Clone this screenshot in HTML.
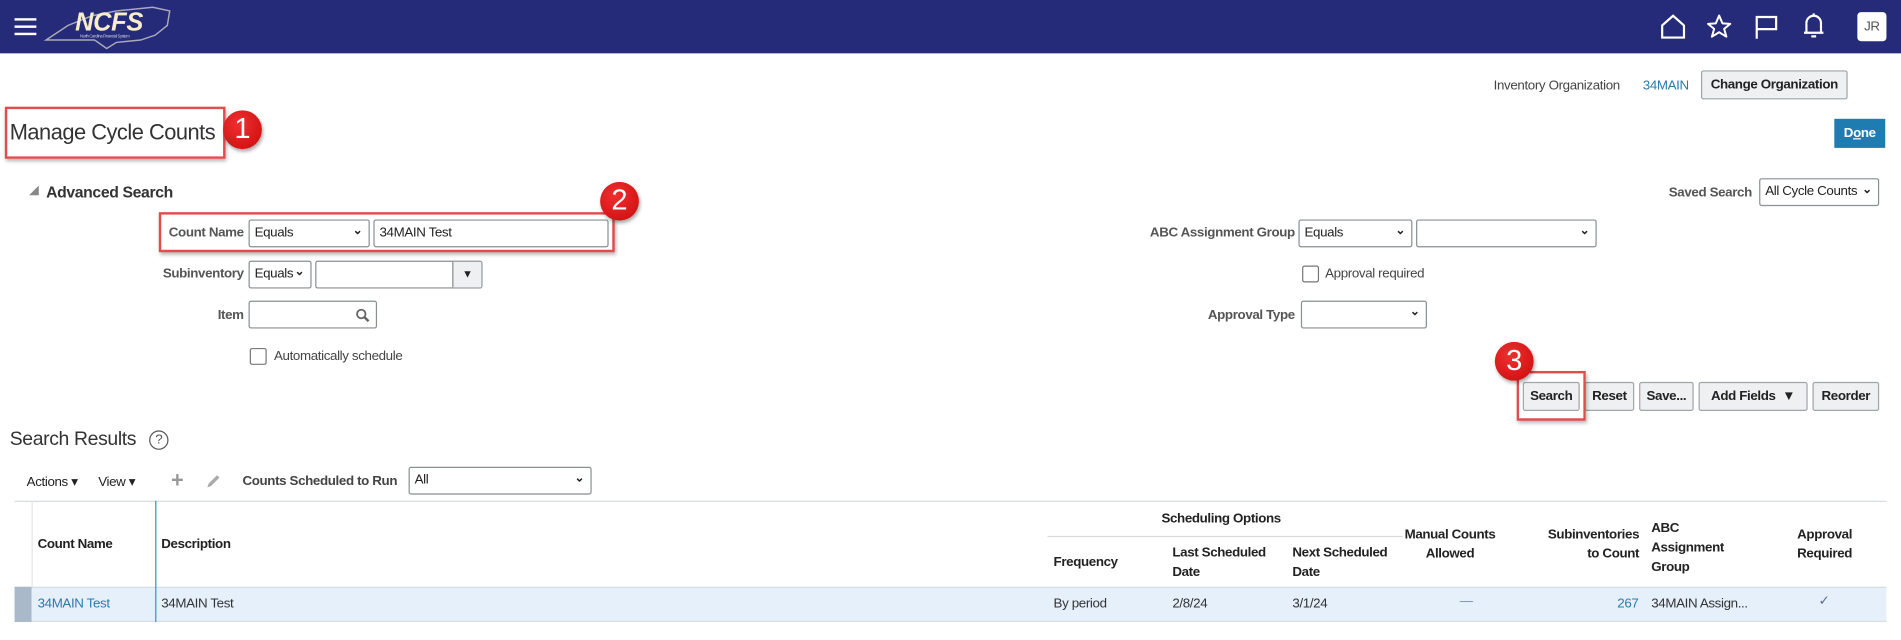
<!DOCTYPE html>
<html><head><meta charset="utf-8">
<style>
html,body{margin:0;padding:0;width:1901px;height:640px;overflow:hidden;background:#fff}
#w{position:absolute;left:0;top:0;width:1568px;height:528px;transform:scale(1.21237);transform-origin:0 0;font-family:"Liberation Sans",sans-serif;color:#333;font-size:11px;letter-spacing:-0.3px}
.a{position:absolute;white-space:nowrap}
.lbl{position:absolute;font-weight:bold;color:#555;font-size:11px;text-align:right;white-space:nowrap}
.sel{position:absolute;border:1px solid #8a8f94;border-radius:2px;background:#fff;box-sizing:border-box;font-size:11px;color:#222;padding:4px 4px;height:23px;white-space:nowrap}
.sel .ch{position:absolute;right:5px;top:3px;font-size:10px;font-weight:bold}
.btn{position:absolute;border:1px solid #a0a5a9;background:#eef0f1;box-sizing:border-box;font-weight:bold;font-size:11px;color:#222;text-align:center;line-height:22px;height:24px;border-radius:2px;white-space:nowrap}
.red{position:absolute;border:2px solid #e24c4c;box-sizing:border-box;box-shadow:1px 2px 3px rgba(0,0,0,.3)}
.badge{position:absolute;width:32px;height:32px;border-radius:50%;background:radial-gradient(circle at 40% 35%,#f03030,#c80a0a);color:#fff;font-size:24px;text-align:center;line-height:32px;box-shadow:1px 2px 3px rgba(0,0,0,.35);letter-spacing:0}
.cb{position:absolute;width:12px;height:12px;border:1px solid #777;border-radius:2px;background:#fff}
.th{position:absolute;font-weight:bold;font-size:11px;color:#222;line-height:16px;white-space:nowrap}
.td{position:absolute;font-size:11px;color:#333;white-space:nowrap}
</style></head><body><div id="w">
<div class="a" style="left:0;top:0;width:1568px;height:44px;background:#252b78"></div>
<div class="a" style="left:12px;top:15px;width:18px;height:2px;background:#fff;box-shadow:0 6px 0 #fff,0 12px 0 #fff"></div>
<svg class="a" style="left:36px;top:3px" width="108" height="38" viewBox="0 0 108 38"><path d="M2 30 L20 18 L40 10 L60 6 L90 3 L104 6 L102 18 L92 26 L80 30 L60 32 L52 37 L42 30 Z" fill="none" stroke="#aab" stroke-width="1.2"/><text x="26" y="22" font-family="Liberation Sans" font-style="italic" font-weight="bold" font-size="21" fill="#f7eccc">NCFS</text><text x="30" y="28" font-size="3.5" fill="#ccd">North Carolina Financial System</text></svg>
<svg class="a" style="left:1369px;top:11px" width="22" height="22" viewBox="0 0 22 22"><path d="M2 10 L11 2 L20 10 L20 20 L2 20 Z" fill="none" stroke="#fff" stroke-width="1.8"/></svg>
<svg class="a" style="left:1407px;top:11px" width="22" height="22" viewBox="0 0 24 24"><path d="M12 2 L15 9 L22 9.5 L16.5 14 L18.5 21 L12 17 L5.5 21 L7.5 14 L2 9.5 L9 9 Z" fill="none" stroke="#fff" stroke-width="1.8" stroke-linejoin="round"/></svg>
<svg class="a" style="left:1446px;top:11px" width="22" height="22" viewBox="0 0 22 22"><path d="M3 21 V3 H19 V13 H3" fill="none" stroke="#fff" stroke-width="1.8"/></svg>
<svg class="a" style="left:1485px;top:10px" width="22" height="24" viewBox="0 0 22 24"><path d="M5 17 V9 A6 6 0 0 1 17 9 V17 M3 17 H19 M9 20 H13 M11 1 V3" fill="none" stroke="#fff" stroke-width="1.8"/></svg>
<div class="a" style="left:1532px;top:10px;width:24px;height:24px;background:#fff;border-radius:3px;color:#555;font-size:11px;text-align:center;line-height:24px">JR</div>

<div class="a" style="left:1232px;top:65px;color:#444;font-size:11px">Inventory Organization</div>
<div class="a" style="left:1355px;top:65px;color:#2a7bab;font-size:11px">34MAIN</div>
<div class="btn" style="left:1403px;top:58px;width:121px">Change Organization</div>

<div class="a" style="left:8px;top:99px;font-size:18px;color:#333;letter-spacing:-0.4px">Manage Cycle Counts</div>
<div class="red" style="left:4px;top:88px;width:182px;height:43px"></div>
<div class="badge" style="left:184px;top:91px">1</div>
<div class="a" style="left:1513px;top:98px;width:42px;height:24px;background:#1f7cb0;color:#fff;font-weight:bold;text-align:center;line-height:24px">D<u>o</u>ne</div>

<div class="a" style="left:24px;top:153px;width:0;height:0;border-left:8px solid transparent;border-bottom:8px solid #888"></div>
<div class="a" style="left:38px;top:151px;font-size:13px;font-weight:bold;color:#333">Advanced Search</div>
<div class="lbl" style="left:1340px;top:153px;width:105px">Saved Search</div>
<div class="sel" style="left:1451px;top:147px;width:99px">All Cycle Counts<span class="ch">⌄</span></div>

<div class="lbl" style="left:100px;top:186px;width:101px">Count Name</div>
<div class="sel" style="left:205px;top:181px;width:100px">Equals<span class="ch">⌄</span></div>
<div class="sel" style="left:308px;top:181px;width:194px">34MAIN Test</div>
<div class="red" style="left:131px;top:175px;width:376px;height:33px"></div>
<div class="badge" style="left:495px;top:150px">2</div>

<div class="lbl" style="left:900px;top:186px;width:168px">ABC Assignment Group</div>
<div class="sel" style="left:1071px;top:181px;width:94px">Equals<span class="ch">⌄</span></div>
<div class="sel" style="left:1168px;top:181px;width:149px"><span class="ch">⌄</span></div>

<div class="lbl" style="left:100px;top:220px;width:101px">Subinventory</div>
<div class="sel" style="left:205px;top:215px;width:52px">Equals<span class="ch">⌄</span></div>
<div class="sel" style="left:260px;top:215px;width:138px;padding:0"><div style="position:absolute;right:0;top:0;width:23px;height:21px;border-left:1px solid #8a8f94;background:#eef0f1;text-align:center;line-height:21px;font-size:9px">▼</div></div>
<div class="cb" style="left:1074px;top:219px"></div>
<div class="a" style="left:1093px;top:220px;color:#444">Approval required</div>

<div class="lbl" style="left:100px;top:254px;width:101px">Item</div>
<div class="sel" style="left:205px;top:248px;width:106px"><svg style="position:absolute;right:5px;top:5px" width="12" height="12" viewBox="0 0 12 12"><circle cx="5" cy="5" r="3.5" fill="none" stroke="#666" stroke-width="1.5"/><path d="M7.5 7.5 L11 11" stroke="#666" stroke-width="2"/></svg></div>
<div class="lbl" style="left:950px;top:254px;width:118px">Approval Type</div>
<div class="sel" style="left:1073px;top:248px;width:104px"><span class="ch">⌄</span></div>

<div class="cb" style="left:206px;top:287px"></div>
<div class="a" style="left:226px;top:288px;color:#444">Automatically schedule</div>

<div class="btn" style="left:1256px;top:315px;width:47px">Search</div>
<div class="btn" style="left:1307px;top:315px;width:41px">Reset</div>
<div class="btn" style="left:1352px;top:315px;width:45px">Save...</div>
<div class="btn" style="left:1401px;top:315px;width:90px">Add Fields&nbsp;&nbsp;▼</div>
<div class="btn" style="left:1495px;top:315px;width:55px">Reorder</div>
<div class="red" style="left:1251px;top:306px;width:57px;height:41px"></div>
<div class="badge" style="left:1233px;top:282px">3</div>

<div class="a" style="left:8px;top:354px;font-size:16px;color:#333">Search Results</div>
<div class="a" style="left:123px;top:355px;width:14px;height:14px;border:1px solid #555;border-radius:50%;font-size:11px;text-align:center;line-height:14px;color:#555">?</div>

<div class="a" style="left:22px;top:391px;color:#222">Actions ▾</div>
<div class="a" style="left:81px;top:391px;color:#222">View ▾</div>
<div class="a" style="left:141px;top:386px;font-size:18px;font-weight:bold;color:#999">+</div>
<svg class="a" style="left:169px;top:390px" width="14" height="14" viewBox="0 0 14 14"><path d="M2 12 L3 9 L10 2 L12 4 L5 11 Z" fill="#aaa"/></svg>
<div class="a" style="left:200px;top:391px;color:#444;font-weight:bold">Counts Scheduled to Run</div>
<div class="sel" style="left:337px;top:385px;width:151px">All<span class="ch">⌄</span></div>

<div class="a" style="left:12px;top:413px;width:1544px;height:1px;background:#d6dadd"></div>
<div class="a" style="left:12px;top:484px;width:1544px;height:29px;background:#e6f0fb;border-top:1px solid #d6dde5;border-bottom:1px solid #d6dde5;box-sizing:border-box"></div>
<div class="a" style="left:12px;top:484px;width:14px;height:29px;background:#a9b9c9"></div>
<div class="a" style="left:26px;top:413px;width:1px;height:71px;background:#e3e6e8"></div>
<div class="a" style="left:128px;top:413px;width:1px;height:100px;background:#2a9bb5"></div>

<div class="th" style="left:31px;top:441px">Count Name</div>
<div class="th" style="left:133px;top:441px">Description</div>
<div class="th" style="left:958px;top:420px">Scheduling Options</div>
<div class="a" style="left:864px;top:442px;width:293px;height:1px;background:#d6dadd"></div>
<div class="th" style="left:869px;top:456px">Frequency</div>
<div class="th" style="left:967px;top:448px">Last Scheduled<br>Date</div>
<div class="th" style="left:1066px;top:448px">Next Scheduled<br>Date</div>
<div class="th" style="left:1155px;top:433px;width:82px;text-align:center">Manual Counts<br>Allowed</div>
<div class="th" style="left:1252px;top:433px;width:100px;text-align:right">Subinventories<br>to Count</div>
<div class="th" style="left:1362px;top:428px">ABC<br>Assignment<br>Group</div>
<div class="th" style="left:1470px;top:433px;width:70px;text-align:center">Approval<br>Required</div>

<div class="td" style="left:31px;top:492px;color:#2a7bab">34MAIN Test</div>
<div class="td" style="left:133px;top:492px">34MAIN Test</div>
<div class="td" style="left:869px;top:492px">By period</div>
<div class="td" style="left:967px;top:492px">2/8/24</div>
<div class="td" style="left:1066px;top:492px">3/1/24</div>
<div class="td" style="left:1204px;top:490px;color:#7a8fa8">—</div>
<div class="td" style="left:1334px;top:492px;color:#2a7bab">267</div>
<div class="td" style="left:1362px;top:492px">34MAIN Assign...</div>
<div class="td" style="left:1500px;top:489px;color:#5a6e90">✓</div>
</div></body></html>
